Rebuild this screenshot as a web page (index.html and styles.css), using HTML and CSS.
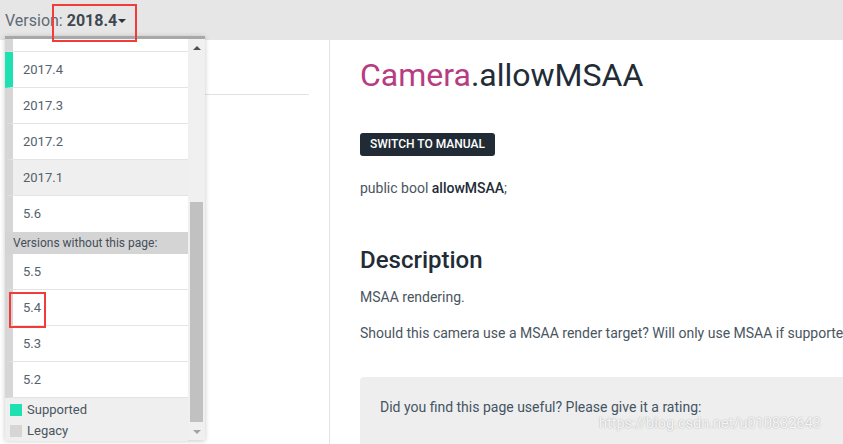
FILE: index.html
```html
<!DOCTYPE html>
<html>
<head>
<meta charset="utf-8">
<link rel="stylesheet" href="styles.css">
</head>
<body>
<header class="topbar">
  <div class="version">Version: <b>2018.4</b><span class="caret"></span></div>
</header>
<div class="main">
  <aside class="sidebar"><div class="side-head"></div></aside>
  <section class="content">
    <h1><span class="cls">Camera</span>.allowMSAA</h1>
    <button class="switch">SWITCH TO MANUAL</button>
    <p class="sig">public bool <b>allowMSAA</b>;</p>
    <h2>Description</h2>
    <p>MSAA rendering.</p>
    <p class="clip">Should this camera use a MSAA render target? Will only use MSAA if supporte</p>
    <div class="rating">Did you find this page useful? Please give it a rating:</div>
  </section>
</div>

<div class="dropdown">
  <div class="dd-body">
    <div class="dd-list">
      <div class="item partial"></div>
      <div class="item supported">2017.4</div>
      <div class="item">2017.3</div>
      <div class="item">2017.2</div>
      <div class="item hover">2017.1</div>
      <div class="item last">5.6</div>
      <div class="group">Versions without this page:</div>
      <div class="item">5.5</div>
      <div class="item">5.4</div>
      <div class="item">5.3</div>
      <div class="item">5.2</div>
    </div>
    <div class="legend">
      <div class="legend-row"><span class="sq green"></span>Supported</div>
      <div class="legend-row"><span class="sq gray"></span>Legacy</div>
    </div>
  </div>
  <div class="scrollbar">
    <div class="sb-btn"><span class="arrow up"></span></div>
    <div class="track"><div class="thumb"></div></div>
    <div class="sb-btn"><span class="arrow down"></span></div>
  </div>
</div>

<div class="mark mark-version"></div>
<div class="mark mark-54"></div>
<div class="watermark">https://blog.csdn.net/u010832643</div>
</body>
</html>
```

FILE: styles.css
```css
html, body {
  margin: 0;
  padding: 0;
  width: 843px;
  height: 444px;
  overflow: hidden;
  background: #fff;
  font-family: Roboto, "Liberation Sans", sans-serif;
}

.topbar {
  height: 40px;
  background: #e6e6e6;
  box-sizing: border-box;
  padding: 2px 0 0 5px;
}

.version {
  font-size: 16px;
  line-height: 38px;
  color: #5f6a76;
}

.version b {
  color: #3e4852;
  font-weight: 700;
}

.caret {
  display: inline-block;
  width: 0;
  height: 0;
  border-left: 4px solid transparent;
  border-right: 4px solid transparent;
  border-top: 4px solid #2b333b;
  vertical-align: middle;
  margin-left: 1px;
  position: relative;
  top: -1px;
}

.main {
  display: flex;
  height: 404px;
}

.sidebar {
  flex: none;
  width: 330px;
  box-sizing: border-box;
  border-right: 1px solid #e3e3e3;
  padding: 0 20px;
}

.side-head {
  height: 54px;
  border-bottom: 1px solid #e2e2e2;
}

.content {
  flex: 1;
  min-width: 0;
  padding-left: 30px;
  white-space: nowrap;
  overflow: hidden;
}

h1 {
  margin: 15px 0 0;
  font-size: 32px;
  line-height: 40px;
  font-weight: 400;
  color: #222c37;
}

.cls {
  color: #b83c82;
}

.switch {
  display: block;
  margin-top: 38px;
  height: 23px;
  padding: 0 10px;
  background: #212b36;
  color: #fff;
  border: none;
  border-radius: 3px;
  font-family: Roboto, "Liberation Sans", sans-serif;
  font-size: 12px;
  font-weight: 500;
  line-height: 23px;
}

p {
  margin: 0 0 16px;
  font-size: 14px;
  line-height: 20px;
  color: #4a5561;
}

.clip {
  overflow: hidden;
}

.sig {
  margin-top: 22px;
}

.sig b {
  color: #222c37;
  font-weight: 500;
}

h2 {
  margin: 47px 0 12px;
  font-size: 24px;
  line-height: 30px;
  font-weight: 500;
  color: #222c37;
}

.rating {
  margin-top: 34px;
  width: 640px;
  background: #eeeeee;
  border-radius: 4px;
  padding: 20px 20px;
  font-size: 14px;
  line-height: 20px;
  color: #455463;
  height: 60px;
}

/* dropdown */
.dropdown {
  position: absolute;
  left: 5px;
  top: 36px;
  width: 200px;
  height: 404px;
  box-sizing: border-box;
  border-top: 3px solid #a8a8a8;
  display: flex;
  background: #efefef;
  box-shadow: 0 1px 5px rgba(0, 0, 0, 0.22);
}

.dd-body {
  width: 183px;
  display: flex;
  flex-direction: column;
}

.dd-list {
  flex: none;
}

.item {
  height: 35px;
  border-left: 8px solid #d6d6d6;
  border-bottom: 1px solid #e4e4e4;
  background: #fff;
  padding-left: 10px;
  font-size: 13px;
  line-height: 35px;
  color: #56616d;
}

.item.partial {
  height: 12px;
}

.item.supported {
  border-left-color: #1fe0b1;
}

.item.hover {
  background: #efefef;
}

.item.last {
  border-bottom: none;
  height: 36px;
}

.group {
  height: 22px;
  background: #d4d4d4;
  padding-left: 8px;
  font-size: 12px;
  line-height: 22px;
  color: #454f5a;
}

.legend {
  flex: 1;
  background: #efefef;
  padding: 1px 0 0 5px;
}

.legend-row {
  display: flex;
  align-items: center;
  height: 21px;
  font-size: 13px;
  color: #4a5561;
}

.sq {
  width: 12px;
  height: 12px;
  margin-right: 5px;
}

.sq.green {
  background: #1fe0b1;
}

.sq.gray {
  background: #d6d6d6;
}

.scrollbar {
  width: 17px;
  display: flex;
  flex-direction: column;
  background: #f0f0f0;
}

.sb-btn {
  height: 17px;
  display: flex;
  align-items: center;
  justify-content: center;
}

.arrow {
  width: 0;
  height: 0;
  border-left: 4px solid transparent;
  border-right: 4px solid transparent;
}

.arrow.up {
  border-bottom: 4px solid #505050;
}

.arrow.down {
  border-top: 4px solid #a3a3a3;
}

.track {
  flex: 1;
  padding: 0 2px;
}

.thumb {
  margin-top: 146px;
  height: 220px;
  background: #c1c1c1;
}

/* annotations */
.mark {
  position: absolute;
  border: 2px solid #f23b3b;
  box-sizing: border-box;
}

.mark-version {
  left: 52px;
  top: 4px;
  width: 85px;
  height: 38px;
}

.mark-54 {
  left: 9px;
  top: 292px;
  width: 37px;
  height: 36px;
}

.watermark {
  position: absolute;
  left: 599px;
  top: 414px;
  font-size: 14.5px;
  line-height: 20px;
  color: rgba(255, 255, 255, 0.9);
  text-shadow: 0 0 1.5px rgba(0, 0, 0, 0.35);
  white-space: nowrap;
}
```
